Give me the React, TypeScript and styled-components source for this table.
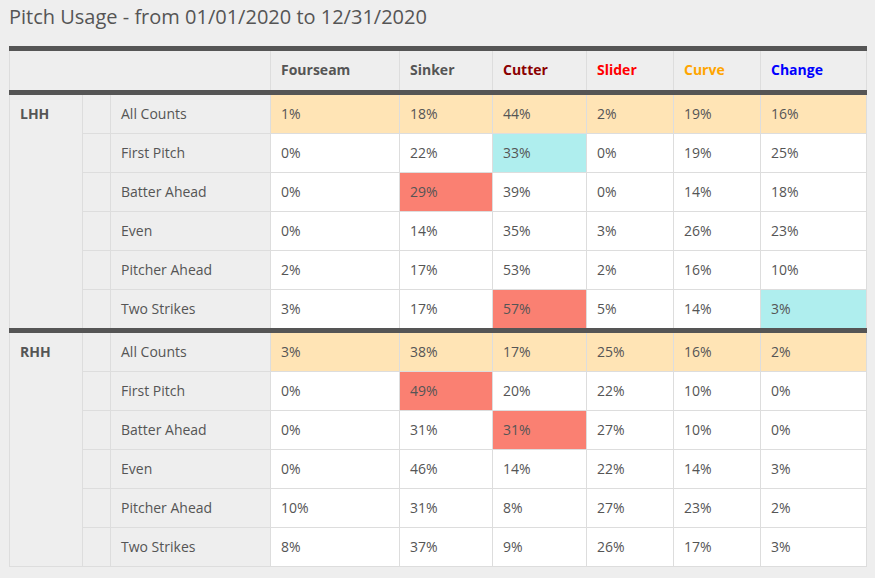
import React from 'react'
import styled, { createGlobalStyle } from 'styled-components'

const GlobalStyle = createGlobalStyle`
  html, body {
    margin: 0;
    padding: 0;
    background-color: #eeeeee;
  }
  body {
    font-family: 'Open Sans', 'Liberation Sans', sans-serif;
    color: #555555;
  }
`

const Page = styled.div`
  padding: 3px 9px 10px 9px;
`

const Title = styled.h2`
  margin: 0 0 16px 0;
  font-size: 20px;
  font-weight: 400;
  line-height: 27px;
  color: #555555;
`

const Table = styled.table`
  border-collapse: collapse;
  table-layout: fixed;
  width: 858px;
  font-size: 14px;
  line-height: 20px;
  border: 1px solid #dddddd;
`

const HeadCell = styled.th<{ tint?: string }>`
  text-align: left;
  font-weight: 700;
  padding: 9px 10px 10px 10px;
  background-color: #eeeeee;
  color: ${(props) => props.tint || '#555555'};
  border: 1px solid #dddddd;
  border-top: 5px solid #555555;
  border-bottom: 5px solid #555555;
`

const Row = styled.tr<{ first?: boolean }>`
  td {
    border-top: ${(props) => (props.first ? '5px solid #555555' : '1px solid #dddddd')};
  }
`

const GroupCell = styled.td`
  vertical-align: top;
  font-weight: 700;
  padding: 9px 10px;
  background-color: #eeeeee;
  border: 1px solid #dddddd;
`

const LabelCell = styled.td`
  padding: 9px 10px;
  background-color: #eeeeee;
  border: 1px solid #dddddd;
  white-space: nowrap;
`

const ValueCell = styled.td<{ mark?: string }>`
  padding: 9px 10px;
  background-color: ${(props) => props.mark || '#ffffff'};
  border: 1px solid #dddddd;
`

const PITCHES = [
  { name: 'Fourseam', color: '#555555' },
  { name: 'Sinker', color: '#555555' },
  { name: 'Cutter', color: '#8b0000' },
  { name: 'Slider', color: '#ff0000' },
  { name: 'Curve', color: '#ffa500' },
  { name: 'Change', color: '#0000ff' }
]

const ALL = '#ffe4b5'
const HIGH = '#fa8072'
const LOW = '#afeeee'

type CountRow = {
  label: string
  values: number[]
  marks?: { [idx: number]: string }
}

type Group = {
  side: string
  rows: CountRow[]
}

const GROUPS: Group[] = [
  {
    side: 'LHH',
    rows: [
      { label: 'All Counts', values: [1, 18, 44, 2, 19, 16] },
      { label: 'First Pitch', values: [0, 22, 33, 0, 19, 25], marks: { 2: LOW } },
      { label: 'Batter Ahead', values: [0, 29, 39, 0, 14, 18], marks: { 1: HIGH } },
      { label: 'Even', values: [0, 14, 35, 3, 26, 23] },
      { label: 'Pitcher Ahead', values: [2, 17, 53, 2, 16, 10] },
      { label: 'Two Strikes', values: [3, 17, 57, 5, 14, 3], marks: { 2: HIGH, 5: LOW } }
    ]
  },
  {
    side: 'RHH',
    rows: [
      { label: 'All Counts', values: [3, 38, 17, 25, 16, 2] },
      { label: 'First Pitch', values: [0, 49, 20, 22, 10, 0], marks: { 1: HIGH } },
      { label: 'Batter Ahead', values: [0, 31, 31, 27, 10, 0], marks: { 2: HIGH } },
      { label: 'Even', values: [0, 46, 14, 22, 14, 3] },
      { label: 'Pitcher Ahead', values: [10, 31, 8, 27, 23, 2] },
      { label: 'Two Strikes', values: [8, 37, 9, 26, 17, 3] }
    ]
  }
]

const COL_WIDTHS = [73, 28, 160, 129, 93, 94, 87, 87, 106]

const App: React.FC = () => {
  return (
    <Page>
      <GlobalStyle />
      <Title>Pitch Usage - from 01/01/2020 to 12/31/2020</Title>
      <Table>
        <colgroup>
          {COL_WIDTHS.map((w, idx) => (
            <col key={idx} style={{ width: w }} />
          ))}
        </colgroup>
        <thead>
          <tr>
            <HeadCell colSpan={3}></HeadCell>
            {PITCHES.map((pitch) => (
              <HeadCell key={pitch.name} tint={pitch.color}>
                {pitch.name}
              </HeadCell>
            ))}
          </tr>
        </thead>
        {GROUPS.map((group) => (
          <tbody key={group.side}>
            {group.rows.map((row, rowIdx) => (
              <Row key={row.label} first={rowIdx === 0}>
                {rowIdx === 0 && (
                  <GroupCell rowSpan={group.rows.length}>{group.side}</GroupCell>
                )}
                <LabelCell></LabelCell>
                <LabelCell>{row.label}</LabelCell>
                {row.values.map((value, idx) => (
                  <ValueCell
                    key={idx}
                    mark={rowIdx === 0 ? ALL : row.marks && row.marks[idx]}
                  >
                    {value}%
                  </ValueCell>
                ))}
              </Row>
            ))}
          </tbody>
        ))}
      </Table>
    </Page>
  )
}

export default App
